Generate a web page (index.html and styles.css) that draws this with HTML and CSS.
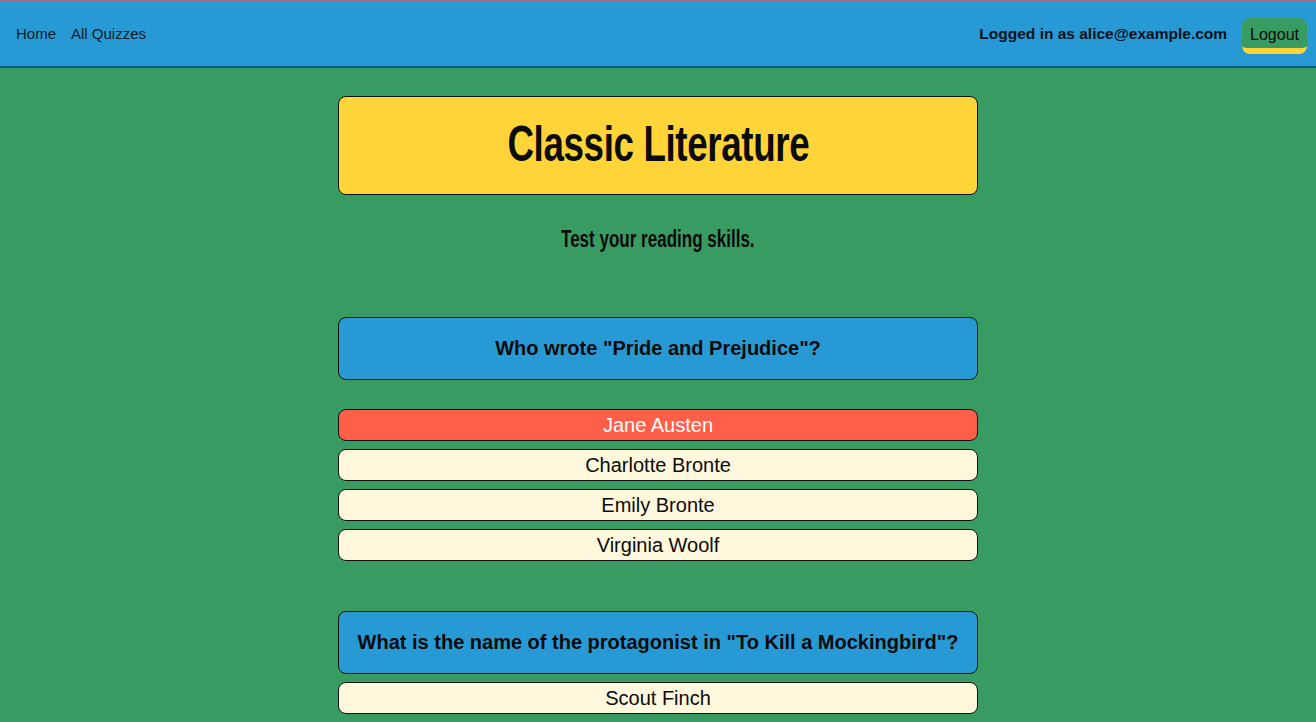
FILE: index.html
```html
<!DOCTYPE html>
<html lang="en">
<head>
<meta charset="utf-8">
<title>Classic Literature</title>
<link rel="stylesheet" href="styles.css">
</head>
<body>
<header class="topbar">
  <nav class="nav-links">
    <a href="#" class="nav-link">Home</a>
    <a href="#" class="nav-link">All Quizzes</a>
  </nav>
  <div class="account">
    <span class="account-user">Logged in as alice@example.com</span>
    <button class="logout" type="button">Logout</button>
  </div>
</header>
<main class="quiz">
  <div class="quiz-title"><h1><span class="condensed">Classic Literature</span></h1></div>
  <p class="quiz-desc"><span class="condensed">Test your reading skills.</span></p>

  <section class="question question--first">
    <h2 class="question-text">Who wrote "Pride and Prejudice"?</h2>
    <ul class="answers answers--spaced">
      <li class="answer answer--wrong">Jane Austen</li>
      <li class="answer">Charlotte Bronte</li>
      <li class="answer">Emily Bronte</li>
      <li class="answer">Virginia Woolf</li>
    </ul>
  </section>

  <section class="question">
    <h2 class="question-text">What is the name of the protagonist in "To Kill a Mockingbird"?</h2>
    <ul class="answers">
      <li class="answer">Scout Finch</li>
      <li class="answer">Atticus Finch</li>
      <li class="answer">Jem Finch</li>
      <li class="answer">Boo Radley</li>
    </ul>
  </section>
</main>
</body>
</html>
```

FILE: styles.css
```css
html {
  background: #389c62;
}
body {
  margin: 0;
  font-family: "Liberation Sans", Arial, sans-serif;
  color: #0b0b0b;
  background: #389c62;
}

.topbar {
  display: flex;
  align-items: center;
  justify-content: space-between;
  height: 65px;
  padding: 0 9px 0 16px;
  background: #279ad6;
  border-top: 1px solid #a8718a;
  border-bottom: 2px solid #0b5a86;
}
.nav-links {
  display: flex;
  gap: 15px;
}
.nav-link {
  font-size: 15px;
  color: #0e1a26;
  text-decoration: none;
}
.account {
  display: flex;
  align-items: center;
  gap: 15px;
}
.account-user {
  font-size: 15.5px;
  font-weight: bold;
  color: #08121c;
}
.logout {
  font-family: "Liberation Sans", Arial, sans-serif;
  font-size: 16px;
  color: #0b0b0b;
  background: #389c62;
  border: 0;
  border-bottom: 6px solid #ffd438;
  border-radius: 8px;
  height: 36px;
  padding: 4px 8px 0;
  line-height: 26px;
  margin-top: 4px;
}

.quiz {
  width: 640px;
  margin: 28px auto 0;
}
.condensed {
  display: inline-block;
  transform-origin: center;
}
.quiz-title {
  background: #ffd438;
  border: 1px solid #111;
  border-radius: 8px;
  padding: 20px 0 23px;
  text-align: center;
}
.quiz-title h1 {
  margin: 0;
  font-weight: bold;
  font-size: 50px;
  line-height: 54px;
  letter-spacing: -0.5px;
}
.quiz-title .condensed {
  transform: scaleX(0.735);
}
.quiz-desc {
  margin: 31px 0 0;
  text-align: center;
  font-weight: bold;
  font-size: 23px;
  line-height: 26px;
}
.quiz-desc .condensed {
  transform: scaleX(0.74);
}

.question {
  margin-top: 50px;
}
.question--first {
  margin-top: 65px;
}
.question-text {
  margin: 0;
  background: #279ad6;
  border: 1px solid #111;
  border-radius: 8px;
  padding: 18px 16px 19px;
  text-align: center;
  font-size: 20px;
  line-height: 24px;
  font-weight: bold;
}
.answers {
  list-style: none;
  margin: 8px 0 0;
  padding: 0;
  display: flex;
  flex-direction: column;
  gap: 8px;
}
.answers--spaced {
  margin-top: 29px;
}
.answer {
  background: #fff8dc;
  border: 1px solid #111;
  border-radius: 8px;
  height: 30px;
  line-height: 30px;
  text-align: center;
  font-size: 20px;
}
.answer--wrong {
  background: #ff5e48;
  color: #ffffff;
}
```
